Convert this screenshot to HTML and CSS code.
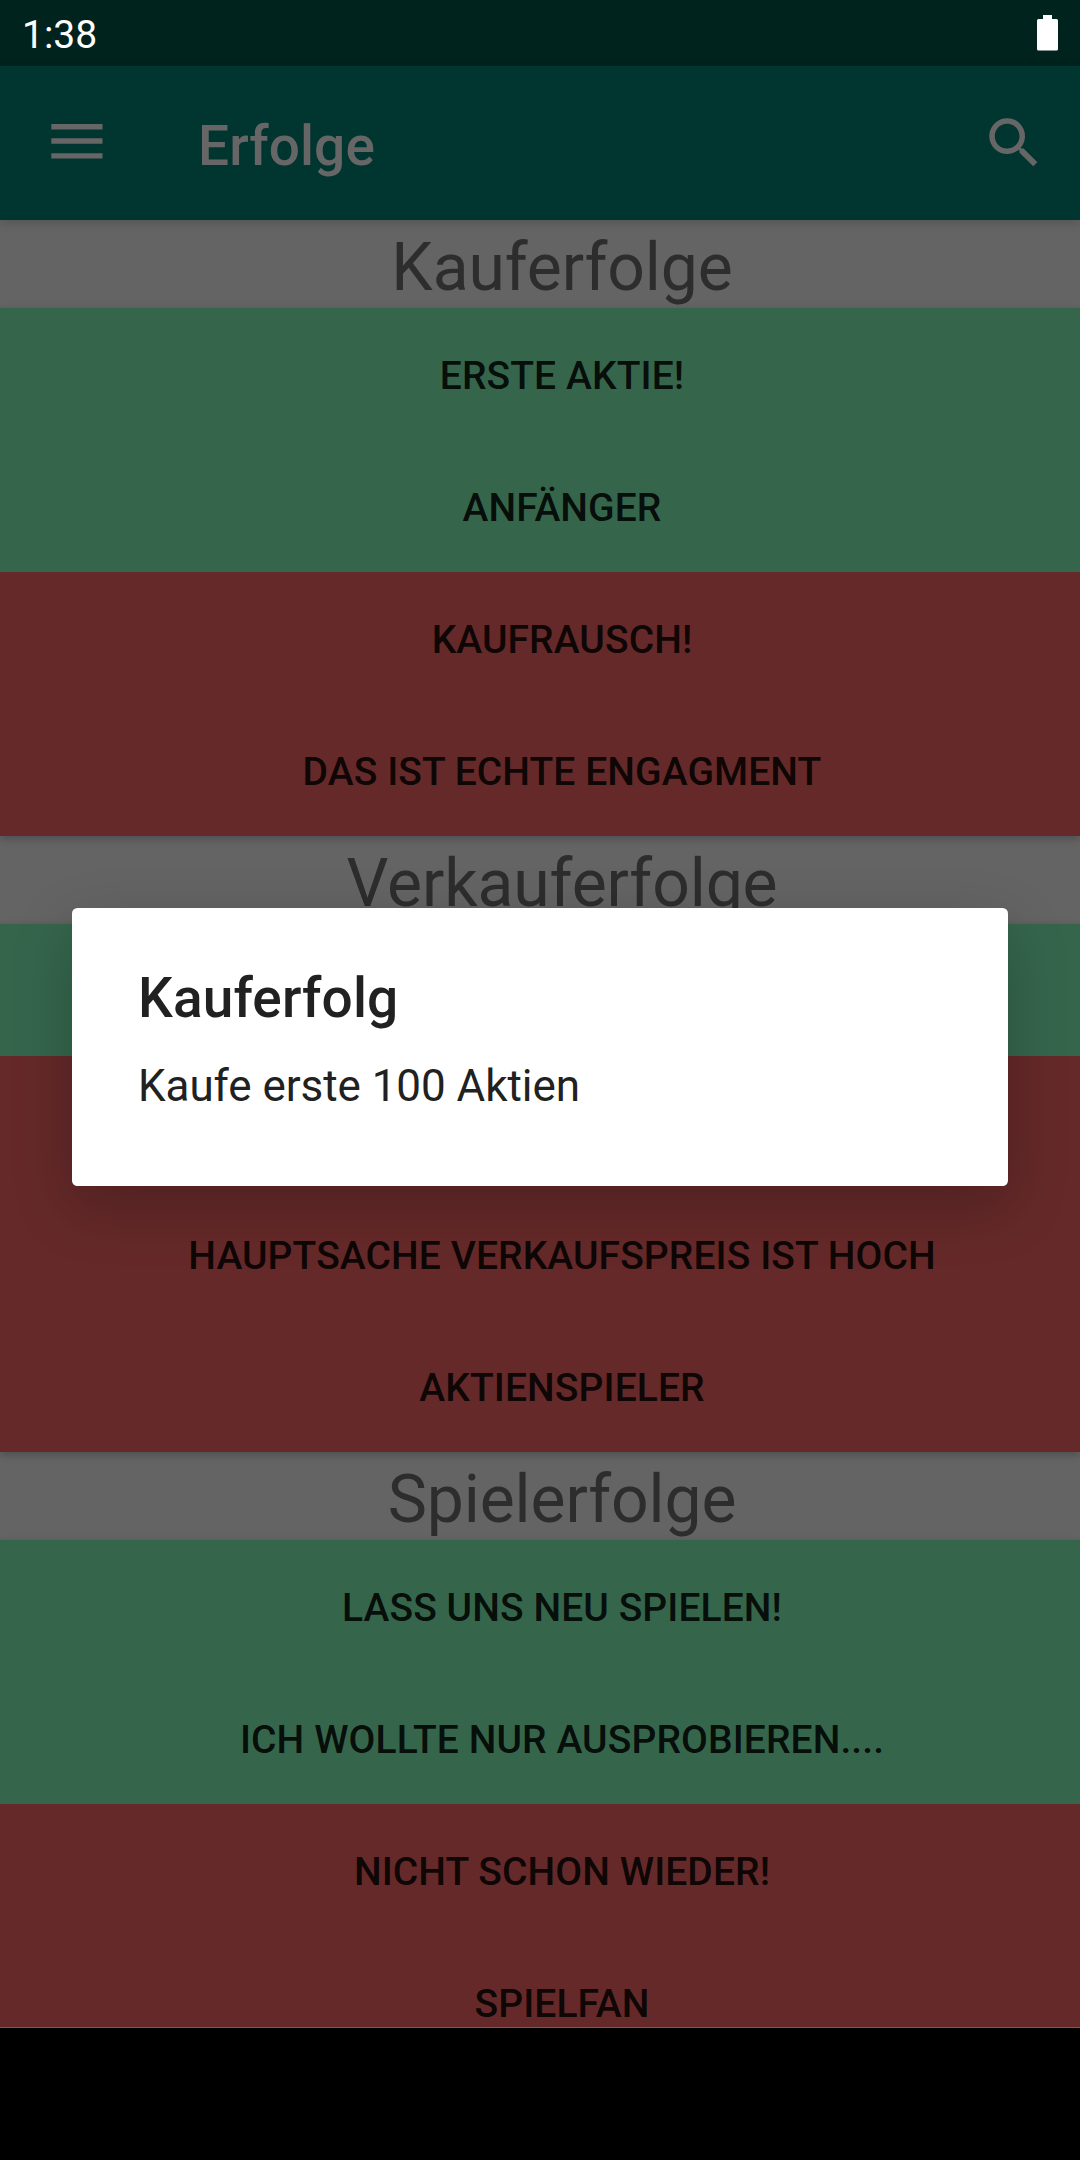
FILE: index.html
```html
<!DOCTYPE html>
<html lang="de">
<head>
<meta charset="utf-8">
<title>Erfolge</title>
<link rel="stylesheet" href="styles.css">
</head>
<body>
<div class="screen">
  <header class="status">
    <span class="clock">1:38</span>
    <svg class="battery" viewBox="0 0 21 36"><path d="M6 0h9v4h4.500a1.500 1.500 0 0 1 1.500 1.500v28.500a1.500 1.500 0 0 1-1.500 1.500h-18a1.500 1.500 0 0 1-1.500-1.500v-28.500a1.500 1.500 0 0 1 1.500-1.500h4.500z"/></svg>
  </header>
  <nav class="toolbar">
    <svg class="menu" viewBox="0 0 52 35"><path d="M.3 0h51.200v5.400H.3zM.3 14.300h51.200v5.400H.3zM.3 29.200h51.200v5.400H.3z"/></svg>
    <h1 class="title">Erfolge</h1>
    <svg class="search" viewBox="0 0 24 24"><path d="M15.500 14h-.79l-.28-.27A6.471 6.471 0 0 0 16 9.500 6.500 6.500 0 1 0 9.500 16c1.610 0 3.090-.59 4.230-1.570l.27.280v.79l5 4.990L20.490 19l-4.990-5zm-6 0C7.010 14 5 11.990 5 9.500S7.010 5 9.500 5 14 7.010 14 9.500 11.990 14 9.500 14z"/></svg>
  </nav>
  <main class="list">
    <h2 class="heading">Kauferfolge</h2>
    <div class="group">
      <div class="row done">ERSTE AKTIE!</div>
      <div class="row done">ANFÄNGER</div>
      <div class="row open">KAUFRAUSCH!</div>
      <div class="row open">DAS IST ECHTE ENGAGMENT</div>
    </div>
    <h2 class="heading">Verkauferfolge</h2>
    <div class="group">
      <div class="row done"></div>
      <div class="row open"></div>
      <div class="row open">HAUPTSACHE VERKAUFSPREIS IST HOCH</div>
      <div class="row open">AKTIENSPIELER</div>
    </div>
    <h2 class="heading">Spielerfolge</h2>
    <div class="group">
      <div class="row done">LASS UNS NEU SPIELEN!</div>
      <div class="row done">ICH WOLLTE NUR AUSPROBIEREN....</div>
      <div class="row open">NICHT SCHON WIEDER!</div>
      <div class="row open">SPIELFAN</div>
    </div>
  </main>
  <footer class="navbar"></footer>
  <div class="dialog" role="dialog">
    <h3 class="dialog-title">Kauferfolg</h3>
    <p class="dialog-text">Kaufe erste 100 Aktien</p>
  </div>
</div>
</body>
</html>
```

FILE: styles.css
```css
* { box-sizing: border-box; margin: 0; }

body { background: #000; font-family: Roboto, sans-serif; }

.screen {
  position: relative;
  display: flex;
  flex-direction: column;
  width: 1080px;
  height: 2160px;
  overflow: hidden;
}

.status {
  display: flex;
  justify-content: space-between;
  flex: none;
  height: 66px;
  padding: 0 22px;
  background: #00231e;
}
.clock { padding-top: 2px; font-size: 39px; line-height: 66px; color: #fff; }
.battery { width: 21px; height: 36px; margin-top: 15px; fill: #fff; }

.toolbar {
  z-index: 1;
  display: flex;
  flex: none;
  height: 154px;
  padding: 0 33px 0 51px;
  background: #003530;
  box-shadow: 0 2px 10px rgba(0, 0, 0, .18);
}
.menu { width: 52px; height: 35px; margin-top: 58px; fill: #666; }
.title {
  flex: 1;
  padding: 3px 0 0 95px;
  font-size: 55px;
  font-weight: 500;
  line-height: 154px;
  letter-spacing: .1px;
  color: #666;
}
.search { width: 66px; height: 66px; margin-top: 44px; fill: #666; }

.list {
  flex: none;
  height: 1808px;
  overflow: hidden;
  background: #646464;
  border-bottom: 1px solid #646464;
}
.heading {
  height: 88px;
  padding: 4px 0 0 44px;
  font-size: 66px;
  font-weight: 400;
  line-height: 88px;
  letter-spacing: -.1px;
  text-align: center;
  color: #2d2d2d;
}
.group { box-shadow: 0 3px 8px rgba(0, 0, 0, .22); }
.row {
  height: 132px;
  padding: 2px 0 0 44px;
  font-size: 39px;
  font-weight: 500;
  line-height: 132px;
  letter-spacing: .08px;
  text-align: center;
  color: rgba(0, 0, 0, .87);
}
.done { background: #35664c; }
.open { background: #652929; }

.navbar { flex: 1; background: #000; }

.dialog {
  position: absolute;
  z-index: 2;
  top: 908px;
  left: 72px;
  width: 936px;
  height: 278px;
  padding: 58px 66px 0;
  border-radius: 5.500px;
  background: #fff;
  color: #212121;
  box-shadow: 0 20px 60px rgba(0, 0, 0, .22);
}
.dialog-title { font-size: 55px; font-weight: 500; line-height: 64px; letter-spacing: .15px; }
.dialog-text { margin-top: 30px; font-size: 44px; line-height: 52px; letter-spacing: -.06px; }
```
